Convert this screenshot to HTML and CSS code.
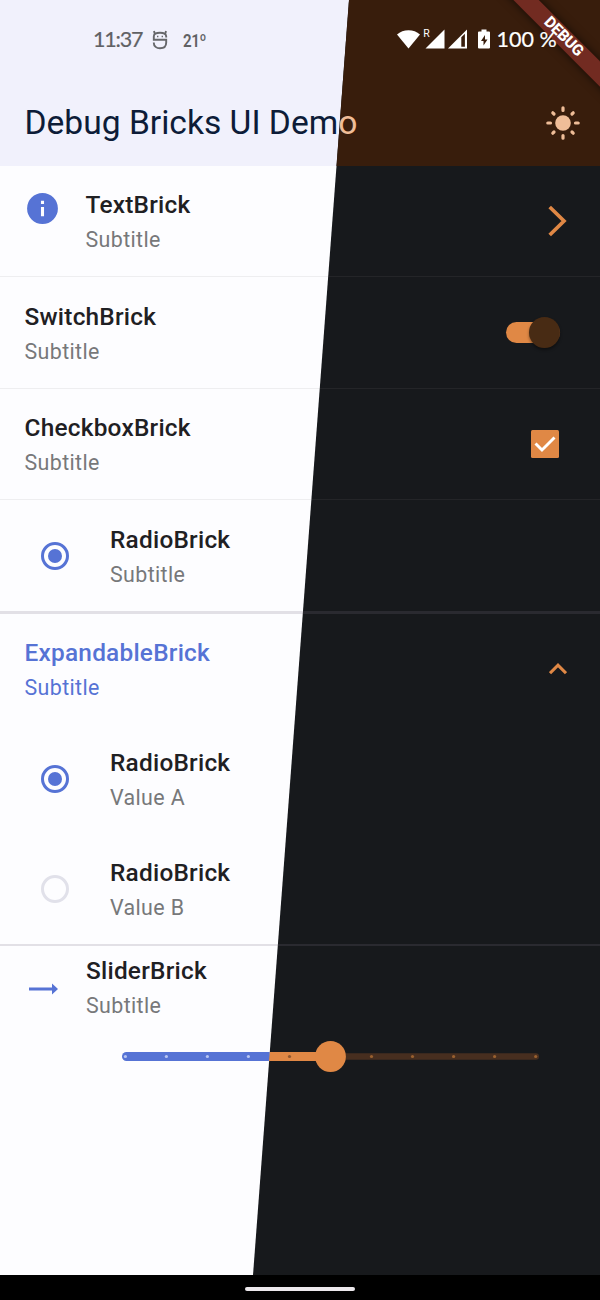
FILE: index.html
```html
<!DOCTYPE html>
<html lang="en">
<head>
<meta charset="utf-8">
<title>Debug Bricks UI Demo</title>
<link rel="stylesheet" href="styles.css">
</head>
<body>
<div class="screen">
  <header class="appbar">
    <div class="status">
      <span class="clock">11:37</span>
      <svg class="s-face" width="16" height="20" viewBox="0 0 16 20" fill="none" stroke="#66676a" stroke-width="1.900"><path d="M14.200 7.500V6.500C14.200 4 12 2.700 8 2.700S1.800 4 1.800 6.500V9.800H14.200V12.500C14.200 16.300 11.500 18.300 8 18.300S1.800 16.300 1.800 13V12.500M2.800 4L2 1M13.200 4L14 1"/><path d="M5.700 5.800V7.300M10.300 5.800V7.300" stroke-width="1.400"/></svg>
      <span class="temp">21º</span>
      <svg class="signal" width="94" height="24" viewBox="0 0 94 24" fill="#fff"><path d="M0 6.500C6 .8 17 .8 23 6.500L11.500 20.500Z"/><path d="M28.500 20.500H47.500V1.500ZM51 20.500H70V1.500Z"/><path d="M64.300 9.300L67.900 5.800V18.800H64.300Z" fill="#381d0c"/><path d="M84.500 1.500H89.500V3.500H92Q93 3.500 93 4.500V19.500Q93 20.500 92 20.500H82Q81 20.500 81 19.500V4.500Q81 3.500 82 3.500H84.500Z"/><path d="M88 7L84 13H86.500V17.500L90.500 11.500H88Z" fill="#381d0c"/><text class="roam" x="26.300" y="9">R</text></svg>
      <span class="level">100 %</span>
    </div>
    <div class="toolbar">
      <h1 class="heading">Debug Bricks UI Dem<span class="heading-dark">o</span></h1>
      <svg class="sun" width="36" height="36" viewBox="-18 -18 36 36" fill="#efbd98" stroke="#efbd98" stroke-width="3.200" stroke-linecap="round"><circle r="7.800" stroke="none"/><path d="M0-15.200V-12.500M0 12.500V15.200M-15.200 0H-12.500M12.500 0H15.200M-10.200-10.200L-9-9M10.200-10.200L9-9M-10.200 10.200L-9 9M10.200 10.200L9 9"/></svg>
    </div>
    <div class="banner">DEBUG</div>
  </header>
  <main class="bricks">
    <section class="brick">
      <svg class="lead" width="37" height="37" viewBox="0 0 24 24" fill="#5673d5"><path d="M12 2a10 10 0 1 0 0 20 10 10 0 0 0 0-20zm1 15h-2v-6h2zm0-8h-2V7h2z"/></svg>
      <div class="text"><h2>TextBrick</h2><p>Subtitle</p></div>
      <svg class="chevron" width="20" height="32" viewBox="0 0 20 32" fill="none" stroke="#e08845" stroke-width="3.700"><path d="M1.700 2L16 16L1.700 30"/></svg>
    </section>
    <section class="brick line switch-row">
      <div class="text"><h2>SwitchBrick</h2><p>Subtitle</p></div>
      <div class="switch"><div class="thumb"></div></div>
    </section>
    <section class="brick line">
      <div class="text"><h2>CheckboxBrick</h2><p>Subtitle</p></div>
      <svg class="check" width="28" height="28" viewBox="0 0 28 28"><rect width="28" height="28" rx="1.500" fill="#e08845"/><path d="M4.500 13.500L11 20L23.500 7.500" fill="none" stroke="#fff" stroke-width="2.900"/></svg>
    </section>
    <section class="brick line radio-row">
      <div class="radio on"></div>
      <div class="text"><h2>RadioBrick</h2><p>Subtitle</p></div>
    </section>
    <section class="group">
      <div class="brick accent">
        <div class="text"><h2>ExpandableBrick</h2><p>Subtitle</p></div>
        <svg class="caret" width="18" height="12" viewBox="0 0 18 12" fill="none" stroke="#e08845" stroke-width="3.100"><path d="M1 10.200L9 2.200L17 10.200"/></svg>
      </div>
      <div class="brick radio-row">
        <div class="radio on"></div>
        <div class="text"><h2>RadioBrick</h2><p>Value A</p></div>
      </div>
      <div class="brick radio-row">
        <div class="radio"></div>
        <div class="text"><h2>RadioBrick</h2><p>Value B</p></div>
      </div>
    </section>
    <section class="slider-brick">
      <div class="slider-head">
        <svg class="arrow" width="30" height="12" viewBox="0 0 30 12" fill="#5673d5"><path d="M0 4.600H23V.5L29 6L23 11.500V7.400H0Z"/></svg>
        <div class="text"><h2>SliderBrick</h2><p>Subtitle</p></div>
      </div>
      <svg class="slider" width="418" height="36" viewBox="122 1039 418 36">
        <rect x="320" y="1053.300" width="219" height="6.400" rx="3.200" fill="#472e1f"/>
        <path d="M269.600 1052H330V1061H268.900Z" fill="#e08845"/>
        <path d="M126.500 1052H269.600L268.900 1061H126.500A4.500 4.500 0 0 1 126.500 1052Z" fill="#5673d5"/>
        <g fill="#b8c6f2"><circle cx="125.400" cy="1056.500" r="1.600"/><circle cx="166.400" cy="1056.500" r="1.600"/><circle cx="207.400" cy="1056.500" r="1.600"/><circle cx="248.400" cy="1056.500" r="1.600"/></g>
        <circle cx="289.500" cy="1056.500" r="1.600" fill="#8f572e"/>
        <g fill="#99602f"><circle cx="371.500" cy="1056.500" r="1.600"/><circle cx="412.500" cy="1056.500" r="1.600"/><circle cx="453.600" cy="1056.500" r="1.600"/><circle cx="494.600" cy="1056.500" r="1.600"/><circle cx="535.700" cy="1056.500" r="1.600"/></g>
        <circle cx="330.500" cy="1056.500" r="15.400" fill="#e08845"/>
      </svg>
    </section>
  </main>
  <footer class="navbar"><div class="pill"></div></footer>
</div>
</body>
</html>
```
FILE: styles.css
```css
* { box-sizing: border-box; }
body { margin: 0; background: #000; font-family: Roboto, sans-serif; }
h1, h2, p { margin: 0; }
svg { display: block; flex: none; }
.screen { width: 600px; height: 1300px; display: flex; flex-direction: column; overflow: hidden; isolation: isolate; position: relative; background: #17191c; }
/* Light theme half, cut along the diagonal */
.screen::before { content: ""; position: absolute; inset: 0; z-index: -1; background: linear-gradient(#f1f1fc 166px, #fdfdff 166px); clip-path: polygon(0 0, 349px 0, 253px 1275px, 0 1275px); }
.screen::after { content: ""; position: absolute; inset: 0 0 auto 0; height: 166px; z-index: -1; background: #381d0c; clip-path: polygon(349px 0, 100% 0, 100% 100%, 336.5px 100%); }
.appbar { height: 166px; position: relative; overflow: hidden; flex: none; }
.status { height: 80px; display: flex; align-items: center; padding-left: 93px; position: relative; z-index: 2; }
.clock { width: 59px; font: 400 21.500px Lato, sans-serif; letter-spacing: -1.200px; color: #606164; -webkit-text-stroke: .2px #606164; padding-bottom: 2px; }
.temp { width: 36px; margin-left: 15px; font-size: 18px; font-weight: 600; color: #606164; padding-top: 1px; transform: scaleX(.84); transform-origin: left; letter-spacing: -.5px; }
.signal { margin-left: 178px; }
.roam { font: 10.500px Roboto, sans-serif; fill: #fff; }
.level { margin-left: 5.500px; font: 400 21.500px Lato, sans-serif; color: #fff; white-space: nowrap; -webkit-text-stroke: .2px #fff; padding-bottom: 2px; }
.banner { position: absolute; z-index: 1; left: 472.900px; top: 27.900px; width: 180px; height: 18.400px; transform: rotate(45deg); background: #722b21; box-shadow: 0 0 10px rgba(0,0,0,.65); color: #fff; font-size: 15.600px; line-height: 17.500px; font-weight: 800; text-align: center; letter-spacing: -.3px; }
.toolbar { display: flex; align-items: center; justify-content: space-between; height: 86px; padding: 0 19px 0 24.500px; }
.heading { font-size: 33.600px; font-weight: 400; line-height: 40px; color: #0d1c38; white-space: nowrap; }
.heading-dark { color: #efbd98; }
.bricks { flex: 1; }
.brick { height: 110px; display: flex; align-items: center; padding: 0 24.500px; }
.brick.line { height: 111.660px; border-top: 1px solid rgba(128,128,128,.12); }
.text { flex: 1; }
h2 { font-size: 24.400px; line-height: 36px; font-weight: 500; letter-spacing: .23px; color: #1f2023; }
p { font-size: 21.400px; line-height: 33px; letter-spacing: .38px; color: #77787a; }
.line .text, .group .text { padding-top: 1px; }
.switch-row .text { padding-top: 2px; }
.accent h2, .accent p { color: #5673d5; }
.lead { align-self: flex-start; margin: 24px 24.500px 0 -.5px; }
.chevron { margin-right: 8px; }
.switch { width: 54.500px; height: 21px; border-radius: 11px; margin-right: 15.500px; background: #e08845; display: flex; align-items: center; justify-content: flex-end; }
.thumb { width: 31px; height: 31px; flex: none; border-radius: 50%; background: #482b14; box-shadow: 0 2px 3px rgba(0,0,0,.4); }
.check { margin-right: 16.500px; }
.radio-row { padding-left: 41px; }
.radio { width: 28px; height: 28px; border: 3px solid #e1e1ea; border-radius: 50%; display: grid; place-items: center; margin-right: 41px; }
.radio.on { border-color: #5673d5; }
.radio.on::after { content: ""; width: 14px; height: 14px; border-radius: 50%; background: #5673d5; }
.group { border-top: 3px solid rgba(120,112,128,.2); border-bottom: 2px solid rgba(120,112,128,.2); }
.group .brick { height: 110px; }
.caret { margin-right: 9px; }
.slider-brick { padding: 7px 24.500px 0 28.500px; }
.slider-head { display: flex; align-items: center; }
.arrow { margin: 3px 27.500px 0 0; }
.slider { margin: 17px 0 0 93.500px; }
.navbar { height: 25px; flex: none; background: #000; display: flex; justify-content: center; padding-top: 12px; }
.pill { width: 110px; height: 4px; border-radius: 2px; background: #ece8ec; }
```
